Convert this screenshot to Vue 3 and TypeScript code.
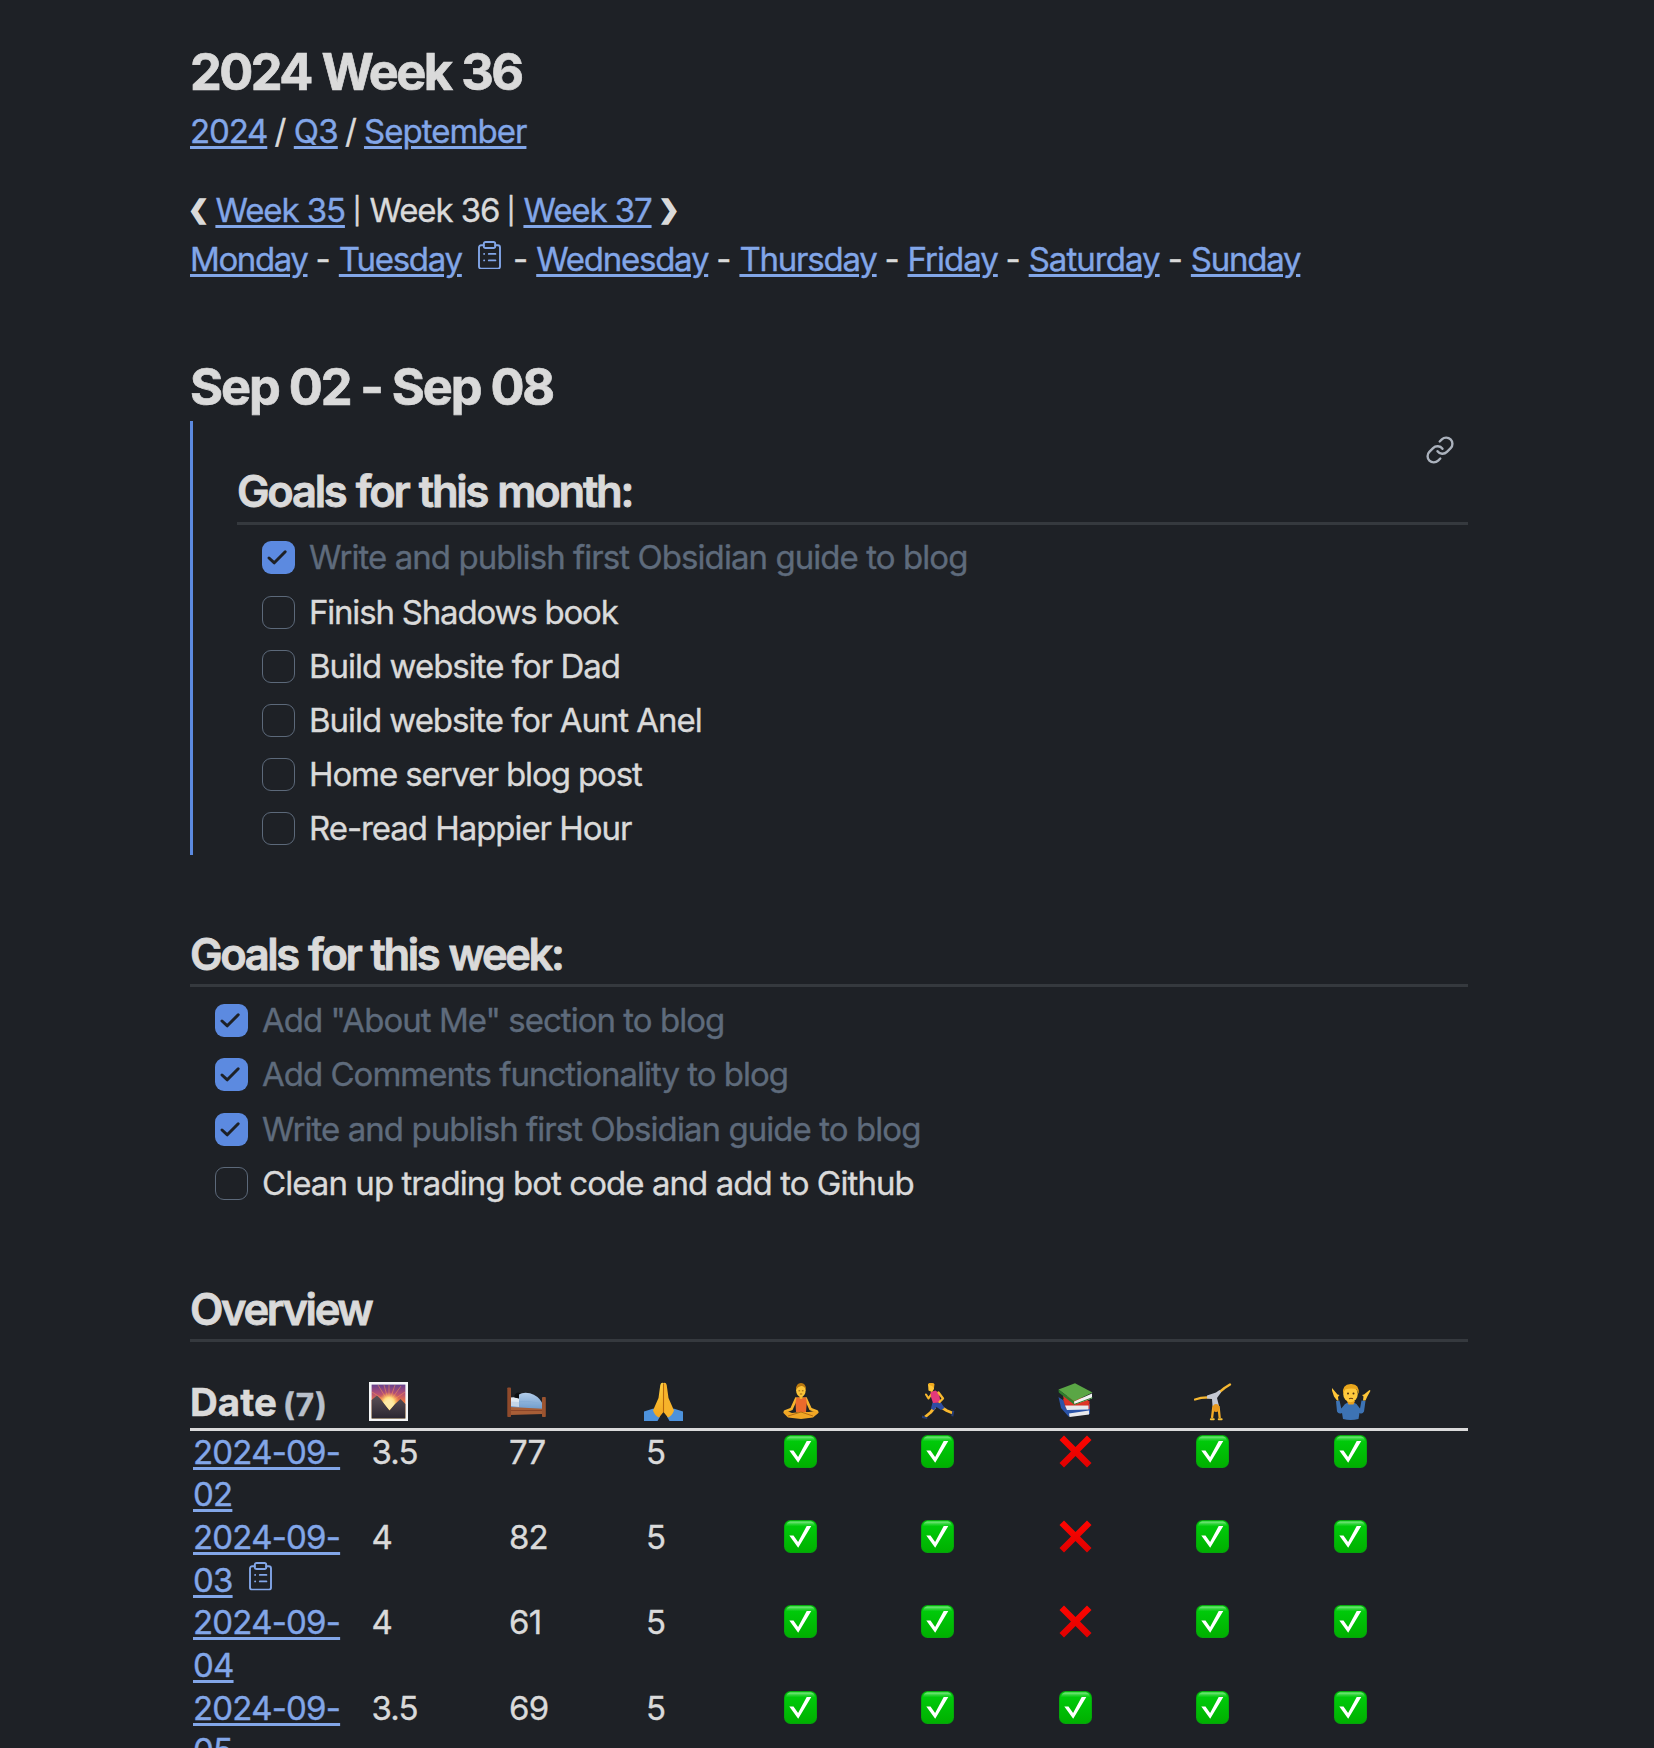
<script setup lang="ts">
interface Link { label: string; spacing: number; note?: boolean; gap?: number }
interface Task { text: string; done: boolean; spacing: number }
interface Day { head: string; tail: string; note?: boolean; sunrise: string; sleep: string; mood: string; habits: boolean[] }

const crumbs: Link[] = [
  { label: '2024', spacing: -1.15, gap: 26.5 },
  { label: 'Q3', spacing: -0.81, gap: 26.2 },
  { label: 'September', spacing: -0.96 },
]

const days: Link[] = [
  { label: 'Monday', spacing: -1.4, gap: 31.3 },
  { label: 'Tuesday', spacing: -1.26, gap: 35.4, note: true },
  { label: 'Wednesday', spacing: -1.25, gap: 31.2 },
  { label: 'Thursday', spacing: -1.22, gap: 30.9 },
  { label: 'Friday', spacing: -1.0, gap: 30.9 },
  { label: 'Saturday', spacing: -0.96, gap: 31.2 },
  { label: 'Sunday', spacing: -1.25 },
]

const monthGoals: Task[] = [
  { text: 'Write and publish first Obsidian guide to blog', done: true, spacing: -0.94 },
  { text: 'Finish Shadows book', done: false, spacing: -1.2 },
  { text: 'Build website for Dad', done: false, spacing: -1.01 },
  { text: 'Build website for Aunt Anel', done: false, spacing: -1.05 },
  { text: 'Home server blog post', done: false, spacing: -1.1 },
  { text: 'Re-read Happier Hour', done: false, spacing: -1.05 },
]

const weekGoals: Task[] = [
  { text: 'Add "About Me" section to blog', done: true, spacing: -0.97 },
  { text: 'Add Comments functionality to blog', done: true, spacing: -0.99 },
  { text: 'Write and publish first Obsidian guide to blog', done: true, spacing: -0.94 },
  { text: 'Clean up trading bot code and add to Github', done: false, spacing: -0.94 },
]

const overview: Day[] = [
  { head: '2024-09-', tail: '02', sunrise: '3.5', sleep: '77', mood: '5', habits: [true, true, false, true, true] },
  { head: '2024-09-', tail: '03', note: true, sunrise: '4', sleep: '82', mood: '5', habits: [true, true, false, true, true] },
  { head: '2024-09-', tail: '04', sunrise: '4', sleep: '61', mood: '5', habits: [true, true, false, true, true] },
  { head: '2024-09-', tail: '05', sunrise: '3.5', sleep: '69', mood: '5', habits: [true, true, true, true, true] },
]

const ls = (px: number) => ({ letterSpacing: `${px}px` })
</script>

<template>
  <svg class="defs" width="0" height="0" aria-hidden="true">
    <defs>
      <linearGradient id="sky" x1="0" y1="0" x2="0" y2="1">
        <stop offset="0" stop-color="#64408c" /><stop offset=".25" stop-color="#b04d78" />
        <stop offset=".5" stop-color="#ee7440" /><stop offset="1" stop-color="#ffc44d" />
      </linearGradient>
      <radialGradient id="sun"><stop offset="0" stop-color="#fff6cf" /><stop offset=".5" stop-color="#ffdf80" /><stop offset="1" stop-color="#ffa24a" stop-opacity="0" /></radialGradient>
      <linearGradient id="rock" x1="0" y1="0" x2="0" y2="1"><stop offset="0" stop-color="#5b5057" /><stop offset="1" stop-color="#2b2731" /></linearGradient>
      <linearGradient id="skin" x1="0" y1="0" x2="0" y2="1"><stop offset="0" stop-color="#ffce3f" /><stop offset="1" stop-color="#f2a51d" /></linearGradient>
      <linearGradient id="quilt" x1="0" y1="0" x2="0" y2="1"><stop offset="0" stop-color="#b3cdea" /><stop offset="1" stop-color="#6d9bcb" /></linearGradient>
      <linearGradient id="green" x1="0" y1="0" x2="0" y2="1"><stop offset="0" stop-color="#00cf0c" /><stop offset="1" stop-color="#00b000" /></linearGradient>
      <linearGradient id="gloss" x1="0" y1="0" x2="0" y2="1"><stop offset="0" stop-color="#8de992" /><stop offset="1" stop-color="#2fd23a" stop-opacity=".2" /></linearGradient>
      <linearGradient id="red" x1="0" y1="0" x2="0" y2="1"><stop offset="0" stop-color="#ff0500" /><stop offset="1" stop-color="#e00000" /></linearGradient>
      <symbol id="clip" viewBox="0 0 23 28.4">
        <g fill="none" stroke="#82a6e8" stroke-width="1.9" stroke-linecap="round" stroke-linejoin="round">
          <path d="M5.8 4.2H3.2A2.2 2.2 0 0 0 1 6.4v19a2.2 2.2 0 0 0 2.2 2.2h16.6a2.2 2.2 0 0 0 2.2-2.2v-19a2.2 2.2 0 0 0-2.2-2.2h-2.6" />
          <rect x="5.8" y="1" width="11.4" height="6" rx="1.8" />
          <path d="M6.1 12.9h.1M10.8 12.9h6.6M6.1 19.4h.1M10.8 19.4h6.6" />
        </g>
      </symbol>
      <symbol id="yes" viewBox="0 0 33 33">
        <rect width="33" height="33" rx="6.5" fill="#06a30c" />
        <rect x=".8" y=".8" width="31.4" height="31.2" rx="6" fill="url(#green)" />
        <path d="M6 1.5h21q3.4.3 4 4.5H2q.6-4.2 4-4.5z" fill="url(#gloss)" />
        <path d="M5.3 15.500h4.200l4.600 6.600L22.700 6h4.600L14.200 27.800z" fill="#fff" />
      </symbol>
      <symbol id="no" viewBox="0 0 33 33">
        <path d="M5 .5 16.500 12 28 .5l4.500 4.500L21 16.500 32.500 28 28 32.500 16.500 21 5 32.500.5 28 12 16.500.5 5z" fill="url(#red)" />
      </symbol>
    </defs>
  </svg>

  <main class="page">
    <h1 class="title">2024 Week 36</h1>

    <nav class="line crumbs">
      <template v-for="c in crumbs" :key="c.label">
        <a class="link" :style="ls(c.spacing)">{{ c.label }}</a>
        <span v-if="c.gap" class="sep" :style="{ width: c.gap + 'px' }">/</span>
      </template>
    </nav>

    <nav class="line weeks">
      <span class="chev">❮</span>
      <a class="link wk">Week 35</a><span class="sep bar">|</span><span class="wk now">Week 36</span><span class="sep bar">|</span><a class="link wk">Week 37</a>
      <span class="chev next">❯</span>
    </nav>

    <nav class="line">
      <template v-for="d in days" :key="d.label">
        <a class="link" :style="ls(d.spacing)">{{ d.label }}</a>
        <svg v-if="d.note" class="clip"><use href="#clip" /></svg>
        <span v-if="d.gap" class="sep dash" :style="{ width: d.gap + 'px' }">-</span>
      </template>
    </nav>

    <h1 class="range">Sep 02 - Sep 08</h1>

    <section class="embed">
      <svg class="chain" viewBox="0 0 24 24" fill="none" stroke="#abb2bd" stroke-width="1.9" stroke-linecap="round" stroke-linejoin="round">
        <path d="M10 13a5 5 0 0 0 7.540.54l3-3a5 5 0 0 0-7.070-7.070l-1.720 1.710" />
        <path d="M14 11a5 5 0 0 0-7.540-.54l-3 3a5 5 0 0 0 7.070 7.070l1.710-1.710" />
      </svg>
      <h2 class="sub">Goals for this month:</h2>
      <ul class="tasks">
        <li v-for="t in monthGoals" :key="t.text" :class="{ done: t.done }">
          <span class="box"><svg v-if="t.done" viewBox="0 0 33 33"><path d="M7 17 12.300 21.800 23.200 10.800" /></svg></span>
          <span :style="ls(t.spacing)">{{ t.text }}</span>
        </li>
      </ul>
    </section>

    <section class="week">
      <h2 class="sub tight">Goals for this week:</h2>
      <ul class="tasks">
        <li v-for="t in weekGoals" :key="t.text" :class="{ done: t.done }">
          <span class="box"><svg v-if="t.done" viewBox="0 0 33 33"><path d="M7 17 12.300 21.800 23.200 10.800" /></svg></span>
          <span :style="ls(t.spacing)">{{ t.text }}</span>
        </li>
      </ul>
    </section>

    <section class="overview">
      <h2 class="sub wide">Overview</h2>
      <div class="row header">
        <div class="date-head">Date <span>(7)</span></div>
        <svg viewBox="0 0 39 39" role="img" aria-label="Sunrise">
          <rect width="39" height="39" fill="#f4f6f7" />
          <rect x="2.600" y="2.600" width="33.800" height="33.800" fill="url(#sky)" />
          <g stroke="#ff9a4f" stroke-width="1" opacity=".5"><path d="M20 21 9 3M20 21 15 3M20 21 20 3M20 21 26 3M20 21 32 4M20 21 36 10M20 21 3 10" /></g>
          <circle cx="20" cy="21" r="11" fill="url(#sun)" />
          <path d="M2.600 18 8 13.500 11.500 17l9 11.500 5-6 6-5.500 4.900 5v14.400H2.600z" fill="url(#rock)" />
          <path d="m14.500 20.500 6 7.500 5-6-5.500-4z" fill="#ffeaa5" />
        </svg>
        <svg viewBox="0 0 39 39" role="img" aria-label="Bed">
          <path d="M4 21h31v8H4z" fill="#6f9acb" />
          <path d="M3.500 15.500q4-1 9 1v5h-9z" fill="#dfe8f2" />
          <path d="M7.500 13q3.500-4 5.500-1.500l-1 5-4.500-1z" fill="#0c0d10" />
          <path d="M12 23V12.500Q16 9.800 23 11.200 31 13.500 35 20.500V27.500L12 25.500z" fill="url(#quilt)" />
          <path d="M12 19.500q11-1 23 2.500" fill="none" stroke="#86add6" stroke-width="1" />
          <path d="M3.500 19.500 12 20v5l-8.500-1z" fill="#c4d5e8" />
          <path d="M3 25l33 1.800V32L3 33z" fill="#a75e37" />
          <path d="M3 28.500h33" stroke="#8a4528" stroke-width="1" />
          <rect x=".3" y="5.500" width="3.700" height="29.500" rx=".8" fill="#8f4a2b" />
          <rect x="35" y="15" width="3.800" height="20" rx=".8" fill="#9b5430" />
        </svg>
        <svg viewBox="0 0 39 39" role="img" aria-label="Folded hands">
          <path d="M0 29.500 9.500 26.500 16 34.500 13.500 39H0z" fill="#4d92dc" />
          <path d="M39 29.500 29.500 26.500 23 34.500 25.500 39H39z" fill="#4d92dc" />
          <path d="M19.500 1Q17 0 16.300 3L14.500 16 9 28.500Q11 34 15 35.500L19.500 30z" fill="url(#skin)" />
          <path d="M19.500 1Q22 0 22.700 3L24.500 16 30 28.500Q28 34 24 35.500L19.500 30z" fill="#f7b32b" />
          <path d="M19.500 2v28" stroke="#b9690c" stroke-width="1.100" />
        </svg>
        <svg viewBox="0 0 39 39" role="img" aria-label="Lotus position">
          <path d="m14 17-4.500 10L3 29.500M24 17l4.500 10 6.500 2.500" fill="none" stroke="#f5b32c" stroke-width="2.800" stroke-linecap="round" stroke-linejoin="round" />
          <path d="M13 15.500h4.500V12h3v3.500H25l-1 7H14z" fill="#f6b42c" />
          <path d="M14.500 15.500h2.500q2 3 4 0h3l.8 5-.8 9.500H14l-.5-9.500z" fill="#ea6a2c" />
          <ellipse cx="18.900" cy="8.300" rx="4.800" ry="6.500" fill="#fcc438" />
          <path d="M14 7.500Q14 1 19 1t4.900 6.500Q22 3.500 19 4t-5 3.500z" fill="#b9780f" />
          <path d="M16.500 8.800h1.600M19.900 8.800h1.600M17.800 12h2.400" stroke="#7d4a0d" stroke-width=".8" />
          <path d="M1 30.500 5 29l5 2 8-1 9 0 6-1 4 1.500-6 5-12 1.500L6 35.500z" fill="#f0a625" />
          <path d="m6 34 13-4 12 4" fill="none" stroke="#b66d12" stroke-width="1" />
        </svg>
        <svg viewBox="0 0 39 39" role="img" aria-label="Running">
          <path d="m16 25-4.500 5.500L6 35" fill="none" stroke="#f8b82e" stroke-width="2.800" stroke-linejoin="round" />
          <path d="m22 25 5.500 3.500 6 2.500" fill="none" stroke="#f8b82e" stroke-width="2.800" />
          <path d="M3 33.500 8.500 35.500 8 37 3 36zM33.500 28.500 35.300 29 34.300 34.500 32.300 34z" fill="#263c74" />
          <path d="M13.500 20.500 22 20.500l3.500 5.500-3.500 2-4.500-3-2.500 3.500-3-2z" fill="#2e4da3" />
          <path d="m12.500 12-3 4.500L7 12.500" fill="none" stroke="#f8b82e" stroke-width="2.100" stroke-linecap="round" stroke-linejoin="round" />
          <path d="M11.500 10 16.500 8.500l3.500 2.500 1.500 9.500-7.500.5L12 15z" fill="#e4397a" />
          <path d="m19.500 10.500 4.500 6L20.500 20" fill="none" stroke="#f8b82e" stroke-width="2.300" stroke-linecap="round" stroke-linejoin="round" />
          <path d="M9 2Q11 .3 14.800 1.500L15 7l-2 3-3.500-1.500z" fill="#ffc638" />
          <path d="M9 2.500Q11 0 15.500 2L15 6l-2-2z" fill="#efa91c" />
        </svg>
        <svg viewBox="0 0 39 39" role="img" aria-label="Books">
          <path d="m1.500 15 2.500 11 7.500 8.500L33 32V22L9 20z" fill="#2b54a8" />
          <path d="m12 31.500 20-3v4L12.500 35z" fill="#e8e9ec" />
          <path d="m6 17 3 9.500 23.500.5V19L12 15z" fill="#cf2a20" />
          <path d="m8 23.500 23.500 0v4L10 28z" fill="#e8e9ec" />
          <path d="M6 13.500 29 16l3 4-.5 3L8 22.500z" fill="#dd3527" />
          <path d="M17 19.500 35 11.500v5L17.500 22.500z" fill="#f1f2f3" />
          <path d="M1.500 7.500 18 1.200 35.500 10.500 17 19.300z" fill="#5aa645" />
          <path d="M1.500 7.500 17 19.300v3.200L1.800 10.500z" fill="#2f7d2c" />
          <path d="m17 22.500 18.500-6.800" stroke="#2f7d2c" stroke-width="1" />
        </svg>
        <svg viewBox="0 0 39 39" role="img" aria-label="Cartwheel">
          <path d="m19 15-12 .8L1 17.500M22 13l8.500-7 5.500-3.500" fill="none" stroke="#f6b731" stroke-width="2.300" stroke-linecap="round" stroke-linejoin="round" />
          <path d="m13 13.500 9-3L25.500 8l1.500 2.500-4 5.500L25 24h-6.500L18 17l-5-.5z" fill="#c5c8d2" />
          <path d="m19.500 24-1.500 12M24.500 24l1.200 12" stroke="#f3ab27" stroke-width="2.300" />
          <ellipse cx="22" cy="26" rx="3.200" ry="4" fill="#e9981d" />
          <path d="M16.800 37.300h3M24.700 37.300h3" stroke="#f9c23a" stroke-width="1.900" stroke-linecap="round" />
        </svg>
        <svg viewBox="0 0 39 39" role="img" aria-label="Shrug">
          <path d="M4 19 7.500 18.500l1.800 8L13 22Q19 18 24.500 22l3.500 4.500L29.500 18.500l4 .5L32 29.500q-1.500 3-4.500 1.500L26.500 37q-8 2-15.500 0l-1-6Q6.500 32.500 5 29.500z" fill="#3d73b4" />
          <path d="M6.500 18.500 6 15 7.500 13 5.500 12.500 0 6 0 8.500l2 6 3 4zM31 18.500 31.500 14.500 30 13l2-.5 5.500-4.500 1 .8-3.300 6L33.500 18.500z" fill="#ffc638" />
          <path d="M15 19h8l-1.500 3.500h-5z" fill="#e9a01f" />
          <ellipse cx="18.500" cy="12" rx="7.300" ry="8.300" fill="#ffc93c" />
          <path d="M11 12Q9.800 2.500 18.700 2t8 10l-2-4.500Q20 5.500 13 7.500z" fill="#e9a61c" />
          <circle cx="16" cy="11.500" r="1" fill="#4d2f10" /><circle cx="21.500" cy="11.500" r="1" fill="#4d2f10" />
          <path d="M17 16.800q2-1 4 0" fill="none" stroke="#6b3d10" stroke-width="1.100" />
        </svg>
      </div>
      <div v-for="d in overview" :key="d.tail" class="row">
        <div class="cell">
          <a class="link head">{{ d.head }}</a>
          <span class="second"><a class="link tail">{{ d.tail }}</a><svg v-if="d.note" class="clip small"><use href="#clip" /></svg></span>
        </div>
        <div class="cell">{{ d.sunrise }}</div>
        <div class="cell">{{ d.sleep }}</div>
        <div class="cell mood">{{ d.mood }}</div>
        <div v-for="(h, i) in d.habits" :key="i" class="cell mark">
          <svg viewBox="0 0 33 33"><use :href="h ? '#yes' : '#no'" /></svg>
        </div>
      </div>
    </section>
  </main>
</template>

<style>
html, body { margin: 0; background: #1e2126; overflow: hidden; }
</style>

<style scoped>
.defs { position: absolute; }
.page {
  box-sizing: border-box;
  width: 1654px;
  height: 1748px;
  padding: 42px 186px 0 190px;
  overflow: hidden;
  background: #1e2126;
  color: #dadada;
  font: 400 33px/49px Inter, "Liberation Sans", sans-serif;
  -webkit-text-stroke: .35px currentColor;
}
h1, h2, ul { margin: 0; padding: 0; font-size: inherit; }
.title, .range {
  font-size: 50.500px;
  font-weight: 700;
  line-height: 60px;
  letter-spacing: -2.550px;
  word-spacing: 1.200px;
  white-space: pre;
  -webkit-text-stroke-width: .7px;
}
.range { margin-top: 73px; letter-spacing: -2.070px; word-spacing: 0; }
.line { display: flex; height: 49px; align-items: center; white-space: nowrap; }
.crumbs { margin-top: 5px; margin-bottom: 29.500px; }
.link {
  color: #82a6e8;
  text-decoration: underline;
  text-decoration-thickness: 2.600px;
  text-underline-offset: 3px;
}
.sep { flex: none; text-align: center; }
.sep.bar { width: 24.500px; font-size: 26px; -webkit-text-stroke-width: .6px; }
.wk { letter-spacing: -1.090px; }
.wk.now { width: 129.500px; }
.chev {
  width: 25.400px;
  height: 49px;
  flex: none;
  font: 700 25px/47px "DejaVu Sans", sans-serif;
  text-indent: -2px;
  -webkit-text-stroke: 1.500px #dadada;
}
.chev.next { text-indent: 7px; }
.clip { width: 23px; height: 28.400px; flex: none; margin: -8px 0 0 16px; }
.clip + .dash { text-indent: 4px; }
.clip.small { margin-top: -7px; }

.embed {
  position: relative;
  box-sizing: border-box;
  height: 434px;
  margin-top: 4px;
  padding: 44px 0 0 44px;
  border-left: 3px solid #5c8ae0;
}
.chain { position: absolute; top: 14.500px; right: 13.500px; width: 30px; height: 30px; }
.sub {
  height: 57px;
  border-bottom: 3px solid #35393e;
  font-size: 43.500px;
  font-weight: 600;
  line-height: 53px;
  letter-spacing: -2.250px;
  word-spacing: 1.500px;
  -webkit-text-stroke-width: .8px;
}
.sub.tight { height: 56px; letter-spacing: -2.380px; }
.sub.wide { height: 56px; letter-spacing: -2.350px; }
.tasks { list-style: none; padding: 6.300px 0 0 25px; }
.tasks li { display: flex; align-items: center; gap: 14px; height: 54.200px; }
.done { color: #5e6b7c; }
.box { box-sizing: border-box; width: 33px; height: 33px; flex: none; border: 1px solid #5c697a; border-radius: 9px; }
.done .box { border: 0; background: #5c8ae0; }
.box svg { display: block; width: 33px; height: 33px; }
.box path { fill: none; stroke: #1e2126; stroke-width: 3; stroke-linecap: round; stroke-linejoin: round; }

.week { margin-top: 73px; }
.week .tasks { padding-top: 7.200px; }
.overview { margin-top: 72.200px; }
.row { display: grid; grid-template-columns: 179px repeat(8, 137.500px); height: 85.400px; width: 1278px; line-height: 42.600px; }
.row.header { height: 89px; align-items: end; border-bottom: 3px solid #dadada; box-sizing: border-box; }
.header svg { width: 39px; height: 39px; margin-bottom: 7px; }
.date-head { font-size: 38.500px; font-weight: 700; line-height: 46px; -webkit-text-stroke-width: .5px; }
.date-head span { margin-left: -3px; font-size: 31.500px; letter-spacing: .9px; color: #b9c0cb; }
.cell { padding-left: 2.500px; letter-spacing: -.8px; }
.cell:first-child { padding-left: 3px; }
.cell.mood { padding-left: 2px; }
.head, .tail { display: inline-block; height: 42.600px; }
.second { display: flex; align-items: center; height: 42.600px; }
.cell.mark { padding-left: 2px; }
.mark svg { display: block; width: 33px; height: 33px; margin-top: 4px; }
</style>
